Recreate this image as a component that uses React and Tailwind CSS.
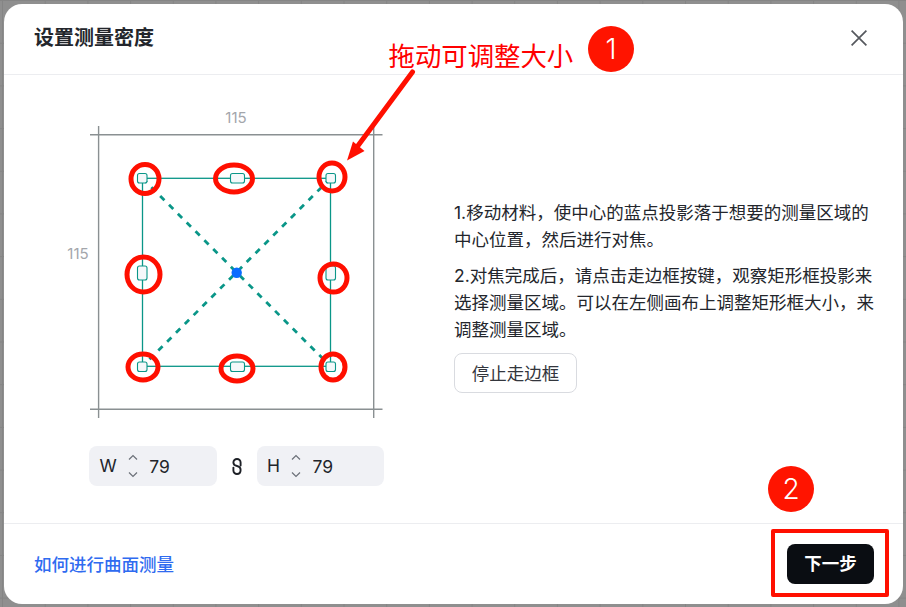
import { useState } from "react";

const FONT = "font-['Inter','Noto_Sans_CJK_SC',sans-serif]";

// 测量框上的手柄 (页面坐标)
const handles = [
  { x: 137.5, y: 173.5, w: 9.5, h: 9.5 },
  { x: 230.5, y: 173.5, w: 14, h: 9.5 },
  { x: 326, y: 173.5, w: 9.5, h: 9.5 },
  { x: 137.5, y: 266, w: 9.5, h: 14 },
  { x: 326, y: 266, w: 9.5, h: 14 },
  { x: 137.5, y: 362, w: 9.5, h: 9.5 },
  { x: 230.5, y: 362, w: 14, h: 9.5 },
  { x: 326, y: 362, w: 9.5, h: 9.5 },
];

// 截图上手画的红圈
const redCircles = [
  { cx: 145, cy: 179, rx: 14, ry: 14.5 },
  { cx: 234, cy: 178.5, rx: 18.5, ry: 13.5 },
  { cx: 332, cy: 177, rx: 13, ry: 14 },
  { cx: 143.5, cy: 274.5, rx: 16.5, ry: 17.5 },
  { cx: 333.5, cy: 278, rx: 13.5, ry: 14 },
  { cx: 143, cy: 367, rx: 15, ry: 13 },
  { cx: 237, cy: 368.5, rx: 16, ry: 12.5 },
  { cx: 333, cy: 367, rx: 12, ry: 13 },
];

function Canvas() {
  return (
    <svg width="295" height="295" viewBox="89 125 295 295" fill="none" className="block overflow-visible">
      <text x="236" y="122.5" textAnchor="middle" fontSize="15" fill="#a3a6ab">115</text>
      <text x="78" y="259" textAnchor="middle" fontSize="15" fill="#a3a6ab">115</text>
      <g stroke="#8a9092" strokeWidth="1.4">
        <path d="M90 134.8H382.5M90 409.3H382.5" />
        <path d="M98.6 126V418M373.7 126V418" />
      </g>
      <rect x="142.5" y="178.3" width="188" height="188" stroke="#0a9688" strokeWidth="1.3" />
      <path
        d="M142.5 178.3L330.5 366.3M330.5 178.3L142.5 366.3"
        stroke="#0a9688"
        strokeWidth="2.8"
        strokeDasharray="6 6.5"
      />
      {handles.map((h, i) => (
        <rect
          key={i}
          x={h.x}
          y={h.y}
          width={h.w}
          height={h.h}
          rx="2"
          fill="#f5f8fa"
          stroke="#0a9688"
          strokeWidth="1.1"
        />
      ))}
      <circle cx="236.7" cy="272.7" r="5.2" fill="#0a6cff" />
    </svg>
  );
}

function Stepper() {
  return (
    <svg width="10" height="24" viewBox="0 0 10 24" fill="none" stroke="#6b7078" strokeWidth="1.2">
      <path d="M1 5.5L5 1.5L9 5.5" />
      <path d="M1 18.5L5 22.5L9 18.5" />
    </svg>
  );
}

function SizeInput({ label, value, onChange }) {
  return (
    <div className="flex h-[40px] w-[127.5px] items-center gap-[11px] rounded-lg bg-[#f0f1f5] pl-[10.5px] text-[17.5px] text-[#22252b]">
      <span className="pt-px">{label}</span>
      <Stepper />
      <input
        className="w-[50px] bg-transparent pl-[0.5px] pt-[2px] outline-none"
        value={value}
        onChange={(e) => onChange(e.target.value)}
      />
    </div>
  );
}

function LinkIcon() {
  return (
    <svg width="10" height="17" viewBox="0 0 10 17" fill="none" stroke="#1d2026" strokeWidth="1.9" strokeLinecap="round">
      <path d="M8.6 7.6V4.5C8.6 2.5 7 1 5 1C3 1 1.4 2.5 1.4 4.5C1.4 6.6 3 7.6 5 8C7 8.4 8.6 9.4 8.6 12C8.6 14.5 7 16 5 16C3 16 1.4 14.5 1.4 12.5V9.6" />
    </svg>
  );
}

export default function App() {
  const [width, setWidth] = useState("79");
  const [height, setHeight] = useState("79");

  return (
    <div
      lang="zh-CN"
      className={`${FONT} relative h-[607px] w-[906px] overflow-hidden bg-[#8f8f8f] bg-[linear-gradient(#858585_1px,transparent_1px),linear-gradient(90deg,#858585_1px,transparent_1px)] bg-[size:42.7px_42.7px] bg-[position:2px_0px] pl-1 pt-1`}
    >
      <div className="flex h-[600px] w-[899px] flex-col rounded-[18px] bg-white">
        <header className="flex h-[71px] shrink-0 items-center justify-between border-b border-[#ecedf0] pb-[2px] pl-[30px] pr-[36px]">
          <h1 className="text-[20px] font-semibold text-[#23262c]">设置测量密度</h1>
          <svg width="16" height="16" viewBox="0 0 16 16" fill="none" stroke="#55585e" strokeWidth="1.7">
            <path d="M.6.6L15.4 15.4M15.4.6L.6 15.4" />
          </svg>
        </header>

        <main className="flex min-h-0 flex-1 items-start pl-[85px]">
          <div className="flex w-[295px] flex-col pt-[50px]">
            <Canvas />
            <div className="mt-[26px] flex items-center justify-between">
              <SizeInput label="W" value={width} onChange={setWidth} />
              <LinkIcon />
              <SizeInput label="H" value={height} onChange={setHeight} />
            </div>
          </div>

          <div className="ml-[70px] mb-[6px] w-[425px] self-center text-[17.5px] leading-[27px] text-[#23262c]">
            <p className="mb-[9px]">1.移动材料，使中心的蓝点投影落于想要的测量区域的中心位置，然后进行对焦。</p>
            <p>2.对焦完成后，请点击走边框按键，观察矩形框投影来选择测量区域。可以在左侧画布上调整矩形框大小，来调整测量区域。</p>
            <button className="mt-[10px] h-[40px] w-[123px] rounded-lg border border-[#d9dbe0] bg-white text-[#33363d]">
              停止走边框
            </button>
          </div>
        </main>

        <footer className="flex h-[81px] shrink-0 items-center justify-between border-t border-[#ecedf0] pl-[30px] pr-[29px]">
          <a className="pt-[2px] text-[17.5px] font-medium text-[#2f6bf0]">如何进行曲面测量</a>
          <button className="h-[40px] w-[87px] rounded-lg bg-[#0a0d12] text-[17.5px] font-semibold text-white">
            下一步
          </button>
        </footer>
      </div>

      {/* 截图上后加的红色标注 */}
      <svg width="906" height="607" viewBox="0 0 906 607" fill="none" className="pointer-events-none absolute left-0 top-0">
        {redCircles.map((c, i) => (
          <ellipse key={i} cx={c.cx} cy={c.cy} rx={c.rx} ry={c.ry} stroke="#ff0f00" strokeWidth="5" />
        ))}
        <path d="M412.5 72L357 147" stroke="#ff0f00" strokeWidth="5" strokeLinecap="round" />
        <path d="M347 160.5L353 141.5L364.5 151Z" fill="#ff0f00" />
      </svg>
      <span className="absolute left-[388.5px] top-[38px] text-[26.4px] leading-[36px] text-[#ff0000]">拖动可调整大小</span>
      <span className="absolute left-[588px] top-[26px] flex h-[46px] w-[46px] items-center justify-center rounded-full bg-[#ff1400] text-[28px] font-light text-white">
        1
      </span>
      <span className="absolute left-[768px] top-[466px] flex h-[46px] w-[46px] items-center justify-center rounded-full bg-[#ff1400] text-[28px] font-light text-white">
        2
      </span>
      <div className="pointer-events-none absolute left-[771px] top-[529px] h-[68px] w-[118px] rounded-[2px] border-4 border-[#ff0f00]" />
    </div>
  );
}
